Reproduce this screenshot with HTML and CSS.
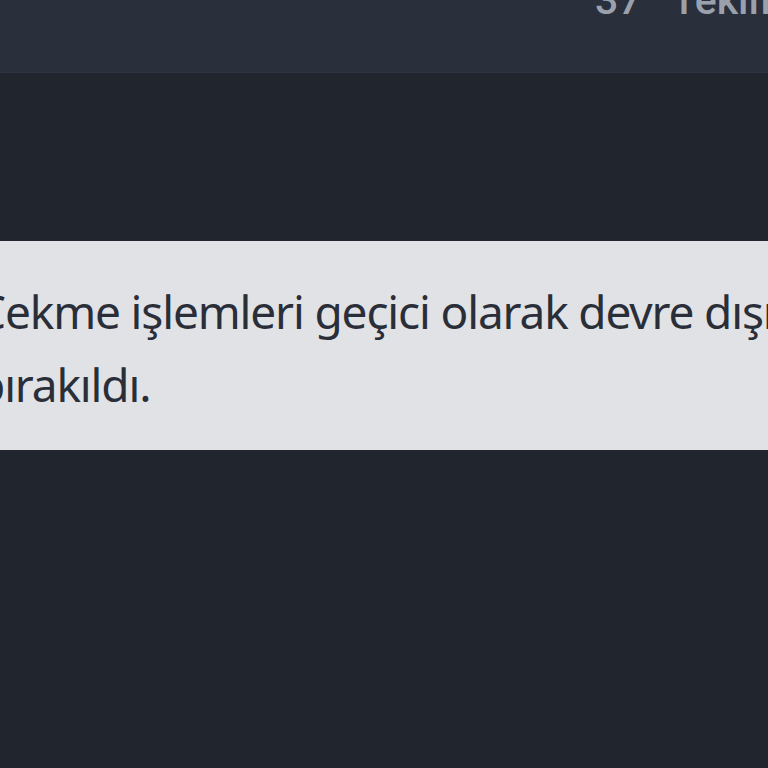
FILE: index.html
```html
<!DOCTYPE html>
<html lang="tr">
<head>
<meta charset="utf-8">
<link rel="stylesheet" href="styles.css">
</head>
<body>
<header class="topbar">
  <div class="count"><span class="num">37</span><span class="label">Teklif</span></div>
</header>
<main class="content">
  <section class="notice">
    <p class="notice-text">Çekme işlemleri geçici olarak devre dışı bırakıldı.</p>
  </section>
</main>
</body>
</html>
```
FILE: styles.css
```css
html, body {
  margin: 0;
  padding: 0;
  width: 768px;
  height: 768px;
  overflow: hidden;
  background: #21252e;
}
.topbar {
  height: 72px;
  background: #292f3b;
  border-bottom: 1px solid #2d3340;
  display: flex;
  padding-left: 595px;
  overflow: hidden;
}
.count {
  display: flex;
  gap: 30px;
  font-family: Roboto, "Liberation Sans", sans-serif;
  font-weight: 500;
  font-size: 41px;
  line-height: 41px;
  margin-top: -20px;
  color: #9ba1ac;
  white-space: nowrap;
}
.content {
  padding-top: 168px;
}
.notice {
  background: #e1e2e6;
  height: 209px;
  margin-left: -40px;
  width: 900px;
  box-sizing: border-box;
  padding: 34px 0 0 17px;
}
.notice-text {
  margin: 0;
  width: 820px;
  font-family: "Noto Sans", "Open Sans", sans-serif;
  font-size: 46px;
  letter-spacing: -1.15px;
  line-height: 73px;
  color: #2a2e38;
}
```
